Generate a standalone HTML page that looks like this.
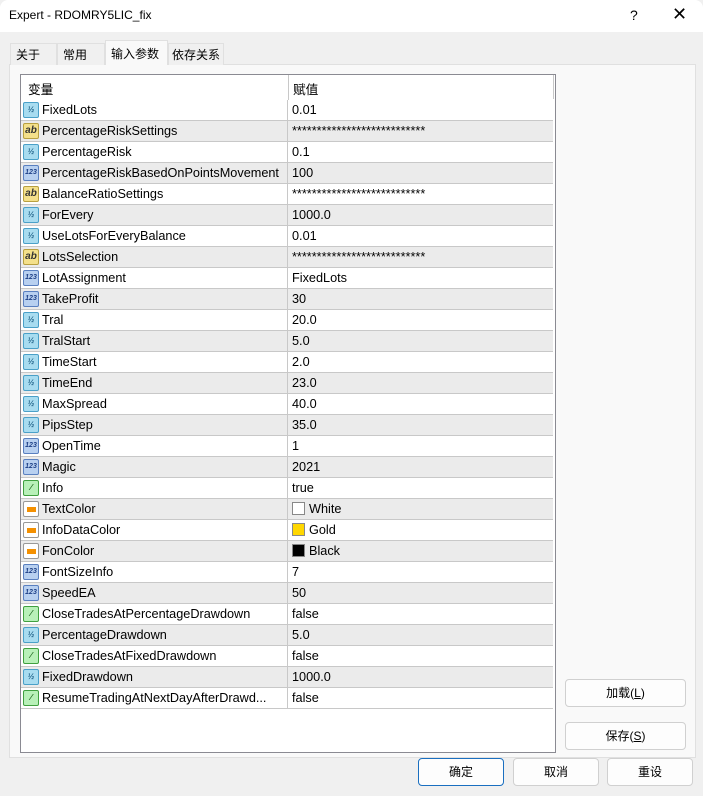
<!DOCTYPE html>
<html><head><meta charset="utf-8"><style>
*{margin:0;padding:0;box-sizing:border-box}
body{width:703px;height:796px;background:#f0f0f0;font-family:"Liberation Sans","Noto Sans CJK SC",sans-serif;font-size:12px;color:#000;position:relative;overflow:hidden}
.title{position:absolute;left:0;top:0;width:703px;height:32px;background:#fff;border-radius:8px 8px 0 0}
.title span{position:absolute;left:9px;top:8px;font-size:12px}
.tab{position:absolute;top:43px;height:22px;background:#f0f0f0;border:1px solid #e0e0e0;border-bottom:none;padding:2px 0 0 5px;font-size:12px}
.panel{position:absolute;left:9px;top:64px;width:687px;height:694px;background:#f9f9f9;border:1px solid #e0e0e0}
.table{position:absolute;left:20px;top:74px;width:536px;height:679px;background:#fff;border:1px solid #8a8a92}
.row{position:absolute;left:1px;width:532px;height:21px;border-bottom:1px solid #c8c8c8;font-size:12.7px}
.row.g{background:#ebebeb}
.row .n{position:absolute;left:21px;top:3px;white-space:nowrap}
.row .v{position:absolute;left:266px;top:0;height:20px;border-left:1px solid #c8c8c8;padding:3px 0 0 4px;width:266px;white-space:nowrap}
.ic{position:absolute;left:2px;top:2px;width:16px;height:16px;border-radius:2px;font-size:8px;line-height:14px;text-align:center;font-weight:bold}
.f{background:#a8dcf0;border:1px solid #4aa0c8;color:#1d5f86}
.a{background:#f4e08a;border:1px solid #b8a040;color:#333;font-size:10px}
.i{background:#b8d0f0;border:1px solid #5a80c0;color:#1d3f86;font-size:7px}
.b{background:#b8f0b8;border:1px solid #40a040;color:#166016}
.c{background:#fff;border:1px solid #999}
.c::after{content:"";position:absolute;left:3px;top:5px;width:9px;height:5px;background:#f49000}
.sw{display:inline-block;width:13px;height:13px;border:1px solid #888;vertical-align:-2px;margin-right:4px}
.btn{position:absolute;height:28px;background:#fdfdfd;border:1px solid #d0d0d0;border-radius:4px;text-align:center;line-height:26px;font-size:12px}
</style></head><body>
<div class="title"><span>Expert - RDOMRY5LIC_fix</span><span style="left:630px;top:7px;font-size:14px">?</span><span style="left:672px;top:4px;font-size:18px">✕</span></div>
<div class="panel"></div>
<div class="tab" style="left:10px;width:47px">关于</div>
<div class="tab" style="left:57px;width:48px">常用</div>
<div class="tab" style="left:105px;top:40px;height:25px;width:63px;background:#f9f9f9;padding-top:4px">输入参数</div>
<div class="tab" style="left:168px;width:56px;padding-left:3px">依存关系</div>
<div class="table">
<div class="row" style="top:0;height:25px;border-bottom:none"><span class="n" style="left:6px;top:4px">变量</span><span class="v" style="height:25px;padding-top:4px">赋值</span></div>
<div style="position:absolute;left:532px;top:0;width:1px;height:24px;background:#c8c8c8"></div>
</div>
<div id="rows" style="position:absolute;left:20px;top:100px">
<div class="row" style="top:0"><i class="ic f">½</i><span class="n">FixedLots</span><span class="v">0.01</span></div>
<div class="row g" style="top:21px"><i class="ic a">ab</i><span class="n">PercentageRiskSettings</span><span class="v">***************************</span></div>
<div class="row" style="top:42px"><i class="ic f">½</i><span class="n">PercentageRisk</span><span class="v">0.1</span></div>
<div class="row g" style="top:63px"><i class="ic i">123</i><span class="n">PercentageRiskBasedOnPointsMovement</span><span class="v">100</span></div>
<div class="row" style="top:84px"><i class="ic a">ab</i><span class="n">BalanceRatioSettings</span><span class="v">***************************</span></div>
<div class="row g" style="top:105px"><i class="ic f">½</i><span class="n">ForEvery</span><span class="v">1000.0</span></div>
<div class="row" style="top:126px"><i class="ic f">½</i><span class="n">UseLotsForEveryBalance</span><span class="v">0.01</span></div>
<div class="row g" style="top:147px"><i class="ic a">ab</i><span class="n">LotsSelection</span><span class="v">***************************</span></div>
<div class="row" style="top:168px"><i class="ic i">123</i><span class="n">LotAssignment</span><span class="v">FixedLots</span></div>
<div class="row g" style="top:189px"><i class="ic i">123</i><span class="n">TakeProfit</span><span class="v">30</span></div>
<div class="row" style="top:210px"><i class="ic f">½</i><span class="n">Tral</span><span class="v">20.0</span></div>
<div class="row g" style="top:231px"><i class="ic f">½</i><span class="n">TralStart</span><span class="v">5.0</span></div>
<div class="row" style="top:252px"><i class="ic f">½</i><span class="n">TimeStart</span><span class="v">2.0</span></div>
<div class="row g" style="top:273px"><i class="ic f">½</i><span class="n">TimeEnd</span><span class="v">23.0</span></div>
<div class="row" style="top:294px"><i class="ic f">½</i><span class="n">MaxSpread</span><span class="v">40.0</span></div>
<div class="row g" style="top:315px"><i class="ic f">½</i><span class="n">PipsStep</span><span class="v">35.0</span></div>
<div class="row" style="top:336px"><i class="ic i">123</i><span class="n">OpenTime</span><span class="v">1</span></div>
<div class="row g" style="top:357px"><i class="ic i">123</i><span class="n">Magic</span><span class="v">2021</span></div>
<div class="row" style="top:378px"><i class="ic b">⁄</i><span class="n">Info</span><span class="v">true</span></div>
<div class="row g" style="top:399px"><i class="ic c"></i><span class="n">TextColor</span><span class="v"><i class="sw" style="background:#fff"></i>White</span></div>
<div class="row" style="top:420px"><i class="ic c"></i><span class="n">InfoDataColor</span><span class="v"><i class="sw" style="background:#ffd700"></i>Gold</span></div>
<div class="row g" style="top:441px"><i class="ic c"></i><span class="n">FonColor</span><span class="v"><i class="sw" style="background:#000"></i>Black</span></div>
<div class="row" style="top:462px"><i class="ic i">123</i><span class="n">FontSizeInfo</span><span class="v">7</span></div>
<div class="row g" style="top:483px"><i class="ic i">123</i><span class="n">SpeedEA</span><span class="v">50</span></div>
<div class="row" style="top:504px"><i class="ic b">⁄</i><span class="n">CloseTradesAtPercentageDrawdown</span><span class="v">false</span></div>
<div class="row g" style="top:525px"><i class="ic f">½</i><span class="n">PercentageDrawdown</span><span class="v">5.0</span></div>
<div class="row" style="top:546px"><i class="ic b">⁄</i><span class="n">CloseTradesAtFixedDrawdown</span><span class="v">false</span></div>
<div class="row g" style="top:567px"><i class="ic f">½</i><span class="n">FixedDrawdown</span><span class="v">1000.0</span></div>
<div class="row" style="top:588px"><i class="ic b">⁄</i><span class="n">ResumeTradingAtNextDayAfterDrawd...</span><span class="v">false</span></div>
</div>
<div class="btn" style="left:565px;top:679px;width:121px">加载(<u>L</u>)</div>
<div class="btn" style="left:565px;top:722px;width:121px">保存(<u>S</u>)</div>
<div class="btn" style="left:418px;top:758px;width:86px;border:1px solid #1a6fc0">确定</div>
<div class="btn" style="left:513px;top:758px;width:86px">取消</div>
<div class="btn" style="left:607px;top:758px;width:86px">重设</div>
</body></html>
